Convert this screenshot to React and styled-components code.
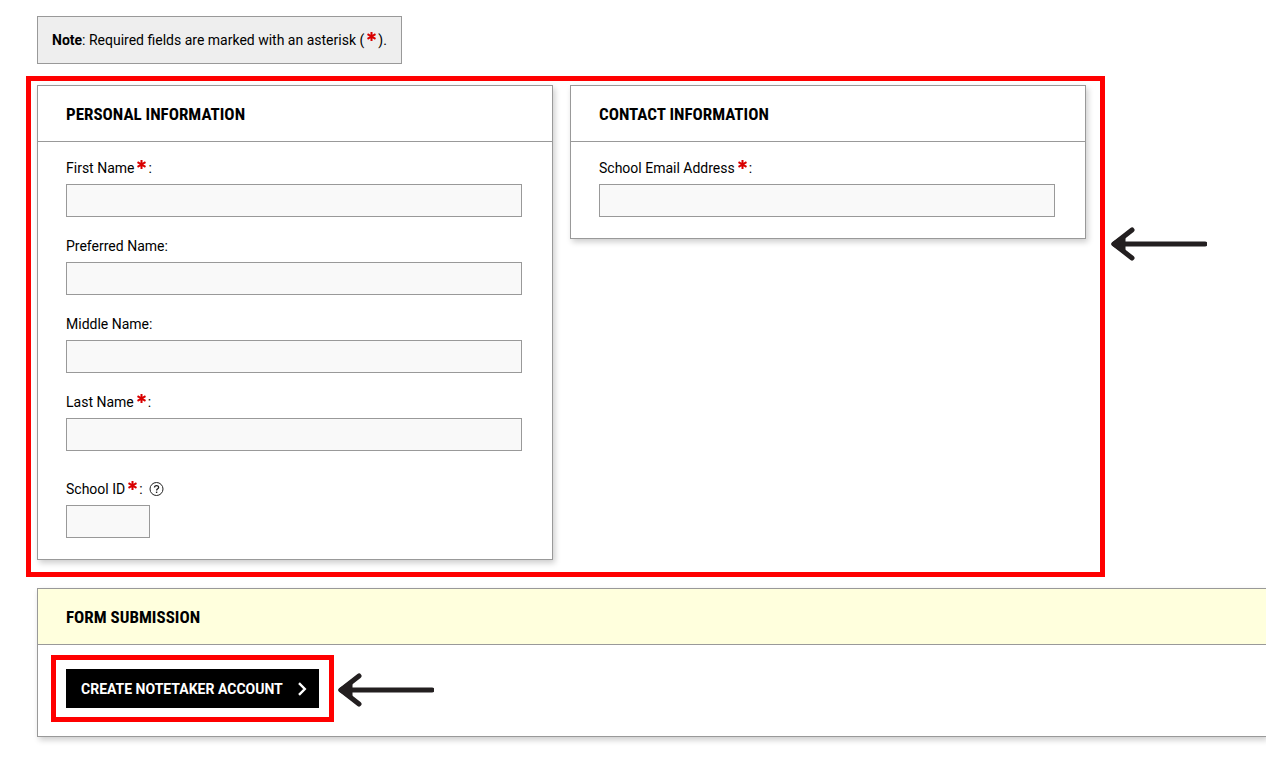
import React from 'react'
import styled, { createGlobalStyle } from 'styled-components'

const Asterisk = () => (
    <StyledAsterisk viewBox="0 0 9 9" role="img" aria-label="required">
        <path d="M4.5 0v9M0.5 2.2l8 4.6M8.5 2.2l-8 4.6" />
    </StyledAsterisk>
)

const Arrow = ({ top }) => (
    <StyledArrow viewBox="0 0 96 36" top={top} aria-hidden="true">
        <path d="M94 18H4M21 4L3 18L21 32" />
        <path d="M3 18L12 12V24Z" fill="#231f20" />
    </StyledArrow>
)

const Field = ({ id, label, required, help, small }) => (
    <StyledField small={small ? 1 : 0}>
        <StyledLabelRow>
            <label htmlFor={id}>
                {label}
                {required && <Asterisk />}:
            </label>
            {help && (
                <StyledHelp type="button" aria-label={`Help: ${label}`}>
                    <svg width="15" height="15" viewBox="0 0 15 15" fill="none" stroke="#222">
                        <circle cx="7.5" cy="7" r="6.5" />
                        <path d="M5.5 5.6C5.5 3 9.6 3 9.6 5.4C9.6 6.9 7.6 6.8 7.6 8.6" strokeWidth="1.3" />
                        <path d="M7.6 9.6v1.4" strokeWidth="1.4" />
                    </svg>
                </StyledHelp>
            )}
        </StyledLabelRow>
        <StyledInput id={id} type="text" small={small ? 1 : 0} />
    </StyledField>
)

const App = () => (
    <>
        <GlobalStyle />
        <StyledForm onSubmit={(e) => e.preventDefault()}>
            <StyledNote>
                <b>Note</b>: Required fields are marked with an asterisk (<Asterisk />
                ).
            </StyledNote>

            <StyledRow>
                <StyledHighlight>
                    <StyledCard>
                        <StyledHeading>Personal Information</StyledHeading>
                        <StyledFields>
                            <Field id="first" label="First Name" required />
                            <Field id="preferred" label="Preferred Name" />
                            <Field id="middle" label="Middle Name" />
                            <Field id="last" label="Last Name" required />
                            <Field id="school-id" label="School ID" required help small />
                        </StyledFields>
                    </StyledCard>
                    <StyledCard>
                        <StyledHeading>Contact Information</StyledHeading>
                        <StyledFields>
                            <Field id="email" label="School Email Address" required />
                        </StyledFields>
                    </StyledCard>
                </StyledHighlight>
                <Arrow top="150px" />
            </StyledRow>

            <StyledSubmission>
                <StyledHeading background="#ffffdd">Form Submission</StyledHeading>
                <StyledActions>
                    <StyledButtonHighlight>
                        <StyledButton type="submit">
                            Create Notetaker Account
                            <svg width="10" height="14" viewBox="0 0 10 14" fill="none" stroke="#fff" strokeWidth="2.4">
                                <path d="M2 1.2l5.8 5.8l-5.8 5.8" />
                            </svg>
                        </StyledButton>
                    </StyledButtonHighlight>
                    <Arrow top="17px" />
                </StyledActions>
            </StyledSubmission>
        </StyledForm>
    </>
)

export default App

const GlobalStyle = createGlobalStyle`
    * {
        box-sizing: border-box;
    }

    body {
        margin: 0;
        overflow-x: hidden;
        background: #fff;
        color: #000;
        font-family: Roboto, sans-serif;
        font-size: 14px;
        line-height: 24px;
    }
`

const StyledForm = styled.form`
    padding: 16px 0 37px;
`

const StyledNote = styled.p`
    width: fit-content;
    margin: 0 0 12px 37px;
    padding: 11px 14px;
    border: 1px solid #999;
    background: #eee;
`

const StyledRow = styled.div`
    display: flex;
    align-items: flex-start;
    gap: 6px;
    padding: 0 59px 0 26px;
`

const StyledHighlight = styled.div`
    flex: 1;
    display: grid;
    grid-template-columns: 1fr 1fr;
    align-items: start;
    gap: 17px;
    padding: 4px 14px 12px 6px;
    border: 5px solid #f00;
`

const StyledCard = styled.section`
    border: 1px solid #999;
    background: #fff;
    box-shadow: 2px 3px 6px rgba(0, 0, 0, 0.2);
`

const StyledSubmission = styled(StyledCard)`
    margin: 11px 0 0 37px;
    border-right: none;
`

const StyledHeading = styled.h2`
    margin: 0;
    padding: 16px 28px 15px;
    border-bottom: 1px solid #999;
    background: ${({ background }) => background || '#fff'};
    font-family: 'Roboto Condensed', Roboto, sans-serif;
    font-size: 17px;
    font-weight: 700;
    line-height: 24px;
    text-transform: uppercase;
`

const StyledFields = styled.div`
    display: flex;
    flex-direction: column;
    gap: 17px;
    padding: 14px 30px 21px 28px;
`

const StyledField = styled.div`
    display: flex;
    flex-direction: column;
    gap: 4px;
    margin-top: ${({ small }) => (small ? '9px' : '0')};
`

const StyledLabelRow = styled.div`
    display: flex;
    align-items: center;
    gap: 6px;
`

const StyledInput = styled.input`
    width: ${({ small }) => (small ? '84px' : '100%')};
    height: 33px;
    padding: 0 8px;
    border: 1px solid #999;
    border-radius: 0;
    background: #f9f9f9;
    font: inherit;
`

const StyledHelp = styled.button`
    display: flex;
    padding: 0;
    border: none;
    background: none;
    cursor: pointer;
`

const StyledAsterisk = styled.svg`
    width: 9px;
    height: 9px;
    margin: 0 2px 0 3px;
    vertical-align: 4px;
    fill: none;
    stroke: #d90000;
    stroke-width: 2;
`

const StyledArrow = styled.svg`
    flex: none;
    width: 96px;
    height: 36px;
    margin-top: ${({ top }) => top};
    fill: none;
    stroke: #231f20;
    stroke-width: 5;
    stroke-linecap: round;
    stroke-linejoin: round;
`

const StyledActions = styled.div`
    display: flex;
    align-items: flex-start;
    gap: 4px;
    padding: 10px 13px 14px;
`

const StyledButtonHighlight = styled.div`
    padding: 9px 10px;
    border: 5px solid #f00;
`

const StyledButton = styled.button`
    display: flex;
    align-items: center;
    gap: 14px;
    height: 39px;
    padding: 0 12px 0 15px;
    border: none;
    background: #000;
    color: #fff;
    font-family: Roboto, sans-serif;
    font-size: 14px;
    font-weight: 700;
    text-transform: uppercase;
    white-space: nowrap;
    cursor: pointer;
`
